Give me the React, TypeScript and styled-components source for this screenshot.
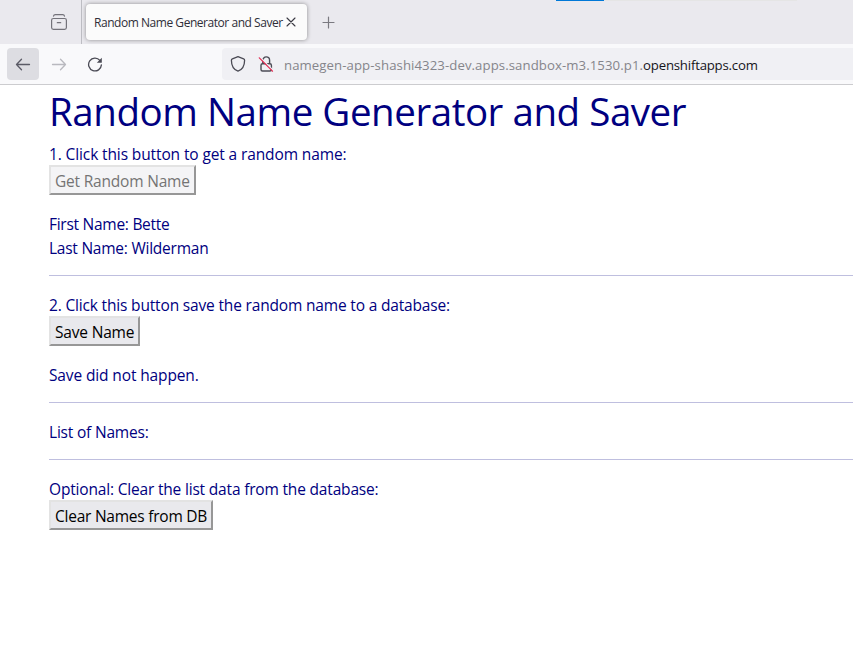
import React from "react";
import styled, { createGlobalStyle } from "styled-components";

const GlobalStyle = createGlobalStyle`
  * { box-sizing: border-box; }
  html, body { margin: 0; padding: 0; }
  body {
    width: 853px;
    height: 653px;
    overflow: hidden;
    background: #fff;
    font-family: "Open Sans", "Noto Sans", sans-serif;
  }
`;

const Browser = styled.div`
  display: flex;
  flex-direction: column;
  width: 853px;
  height: 653px;
  overflow: hidden;
`;

const TabStrip = styled.header`
  position: relative;
  display: flex;
  flex: none;
  height: 44px;
  background: #eae9ee;
`;

const LoadTrack = styled.div`
  position: absolute;
  top: 0;
  left: 556px;
  width: 241px;
  height: 1px;
  background: #e5e5e5;
`;

const LoadBar = styled.div`
  width: 48px;
  height: 1px;
  background: #0078d7;
`;

const RecentTabs = styled.div`
  width: 82px;
  height: 44px;
  padding: 12px 0 0 49px;
  border-right: 1px solid #bdbdc3;
`;

const Tab = styled.div`
  display: flex;
  align-items: center;
  width: 221px;
  height: 36px;
  margin: 4px 0 0 4px;
  padding: 0 0 0 8px;
  border-radius: 4px;
  background: #fbfbfb;
  box-shadow: 0 0 4px rgba(0, 0, 0, 0.4);
`;

const TabTitle = styled.span`
  width: 191px;
  padding-top: 2px;
  font-size: 12px;
  line-height: 18px;
  letter-spacing: -0.46px;
  white-space: nowrap;
  color: #2f2e38;
`;

const IconSlot = styled.span<{ $left?: number; $top?: number }>`
  display: block;
  flex: none;
  line-height: 0;
  margin-left: ${(p) => p.$left ?? 0}px;
  margin-top: ${(p) => p.$top ?? 0}px;
`;

const NavBar = styled.nav`
  display: flex;
  flex: none;
  height: 41px;
  padding: 4px 0 4px 7px;
  background: #f9f9fb;
  border-bottom: 1px solid #cccccf;
`;

const NavButton = styled.button<{ $active?: boolean }>`
  display: grid;
  place-items: center;
  width: 32px;
  height: 32px;
  margin: 0 4px 0 0;
  padding: 0;
  border: 0;
  border-radius: 4px;
  background: ${(p) => (p.$active ? "#dddde2" : "transparent")};
`;

const AddressBar = styled.div`
  display: flex;
  align-items: center;
  flex: 1;
  height: 32px;
  margin-left: 107px;
  padding-left: 8px;
  border-radius: 4px 0 0 4px;
  background: #f0f0f4;
`;

const Url = styled.span`
  margin-left: 10px;
  padding-top: 2px;
  font-size: 13.2px;
  line-height: 20px;
  letter-spacing: 0.08px;
  white-space: nowrap;
  color: #85858b;
`;

const Host = styled.span`
  color: #15141a;
  letter-spacing: -0.2px;
`;

const Page = styled.main`
  flex: 1;
  padding: 2px 0 0 49px;
  color: navy;
  background: #fff;
`;

const Title = styled.h1`
  margin: 0 0 8px;
  font-size: 38.5px;
  font-weight: 400;
  line-height: 48px;
  letter-spacing: -0.45px;
  white-space: nowrap;
`;

const Section = styled.section`
  display: flex;
  flex-direction: column;
  align-items: flex-start;
`;

const Line = styled.p<{ $tracking: number }>`
  height: 24px;
  margin: 0;
  font-size: 15.5px;
  line-height: 23px;
  letter-spacing: ${(p) => p.$tracking}px;
  white-space: nowrap;
`;

const PushButton = styled.button<{ $width: number; $tracking: number }>`
  width: ${(p) => p.$width}px;
  height: 30px;
  margin: -2px 0 18px;
  padding: 2px 0 0 4px;
  border: 2px solid;
  border-color: #e3e3e3 #979797 #979797 #e3e3e3;
  background: #e9e9ed;
  color: #000;
  font-family: inherit;
  font-size: 15.5px;
  line-height: 24px;
  letter-spacing: ${(p) => p.$tracking}px;
  text-align: left;
  white-space: nowrap;

  &:disabled {
    background: #f4f4f6;
    color: #747474;
  }
`;

const Rule = styled.hr`
  width: 100%;
  height: 1px;
  margin: 14px 0 18px;
  border: 0;
  background: #bfbfdf;
`;

const StackIcon = () => (
  <svg width="20" height="20" viewBox="0 0 20 20" fill="none" stroke="#73727a" strokeWidth="1.2" strokeLinecap="round">
    <path d="M4.500 4.200q.3-1.500 1.800-1.500h7.400q1.500 0 1.800 1.500" />
    <rect x="2.600" y="6.500" width="14.800" height="10.900" rx="1.800" />
    <path d="M8.300 10.700h3.400" />
  </svg>
);

const CloseIcon = () => (
  <svg width="12" height="12" viewBox="0 0 12 12" fill="none" stroke="#3a3943" strokeWidth="1.1" strokeLinecap="round">
    <path d="M2 2l8 8M10 2l-8 8" />
  </svg>
);

const PlusIcon = () => (
  <svg width="14" height="14" viewBox="0 0 14 14" fill="none" stroke="#7a7980" strokeWidth="1.2" strokeLinecap="round">
    <path d="M6.500 1v11M1 6.500h11" />
  </svg>
);

const ArrowIcon = ({ forward = false }: { forward?: boolean }) => (
  <svg width="16" height="16" viewBox="0 0 16 16" fill="none" stroke={forward ? "#b9b9bf" : "#5b5b66"} strokeWidth="1.3" strokeLinecap="round" strokeLinejoin="round">
    <path d={forward ? "M1.5 8.5h13M9.5 3.2l5 5.3-5 5.3" : "M14.5 8.5h-13M6.5 3.2l-5 5.3 5 5.3"} />
  </svg>
);

const ReloadIcon = () => (
  <svg width="16" height="16" viewBox="0 0 16 16" fill="none">
    <path d="M12.900 4.400A6.400 6.400 0 1 0 14.400 8.900" stroke="#4b4b55" strokeWidth="1.300" strokeLinecap="round" />
    <path d="M14.800 1.700v4.600a.5.5 0 0 1-.5.5H9.800z" fill="#4b4b55" />
  </svg>
);

const ShieldIcon = () => (
  <svg width="16" height="18" viewBox="0 0 16 18" fill="none" stroke="#4b4b55" strokeWidth="1.3" strokeLinejoin="round">
    <path d="M8 1.600l5.600 2.200q1 .4 1 1.400c0 5.200-2.200 9.300-6.600 11C3.600 14.500 1.400 10.400 1.400 5.200q0-1 1-1.400z" />
  </svg>
);

const InsecureIcon = () => (
  <svg width="16" height="18" viewBox="0 0 16 18" fill="none">
    <rect x="3" y="8.700" width="10.400" height="7.300" rx="1.500" stroke="#4b4b55" strokeWidth="1.400" />
    <path d="M4.800 8.500V5.300a3.400 3.400 0 0 1 6.800 0v3.200" stroke="#4b4b55" strokeWidth="1.400" />
    <path d="M2.200 2.500L15.200 15.500" stroke="#f0f0f4" strokeWidth="1.500" />
    <path d="M1.300 2.800L14.500 16.200" stroke="#e22850" strokeWidth="1.200" strokeLinecap="round" />
  </svg>
);

export default function App() {
  return (
    <>
      <GlobalStyle />
      <Browser>
        <TabStrip>
          <RecentTabs>
            <StackIcon />
          </RecentTabs>
          <Tab>
            <TabTitle>Random Name Generator and Saver</TabTitle>
            <IconSlot $top={-1}>
              <CloseIcon />
            </IconSlot>
          </Tab>
          <IconSlot $left={15} $top={16}>
            <PlusIcon />
          </IconSlot>
          <LoadTrack>
            <LoadBar />
          </LoadTrack>
        </TabStrip>
        <NavBar>
          <NavButton $active aria-label="Back">
            <ArrowIcon />
          </NavButton>
          <NavButton aria-label="Forward">
            <ArrowIcon forward />
          </NavButton>
          <NavButton aria-label="Reload">
            <ReloadIcon />
          </NavButton>
          <AddressBar>
            <IconSlot>
              <ShieldIcon />
            </IconSlot>
            <IconSlot $left={12}>
              <InsecureIcon />
            </IconSlot>
            <Url>
              namegen-app-shashi4323-dev.apps.sandbox-m3.1530.p1.<Host>openshiftapps.com</Host>
            </Url>
          </AddressBar>
        </NavBar>
        <Page>
          <Title>Random Name Generator and Saver</Title>
          <Section>
            <Line $tracking={-0.12}>1. Click this button to get a random name:</Line>
            <PushButton $width={147} $tracking={-0.2} disabled>
              Get Random Name
            </PushButton>
            <Line $tracking={-0.27}>First Name: Bette</Line>
            <Line $tracking={-0.24}>Last Name: Wilderman</Line>
          </Section>
          <Rule />
          <Section>
            <Line $tracking={-0.17}>2. Click this button save the random name to a database:</Line>
            <PushButton $width={91} $tracking={-0.18}>
              Save Name
            </PushButton>
            <Line $tracking={-0.13}>Save did not happen.</Line>
          </Section>
          <Rule />
          <Section>
            <Line $tracking={-0.2}>List of Names:</Line>
          </Section>
          <Rule />
          <Section>
            <Line $tracking={-0.18}>Optional: Clear the list data from the database:</Line>
            <PushButton $width={164} $tracking={-0.24}>
              Clear Names from DB
            </PushButton>
          </Section>
        </Page>
      </Browser>
    </>
  );
}
